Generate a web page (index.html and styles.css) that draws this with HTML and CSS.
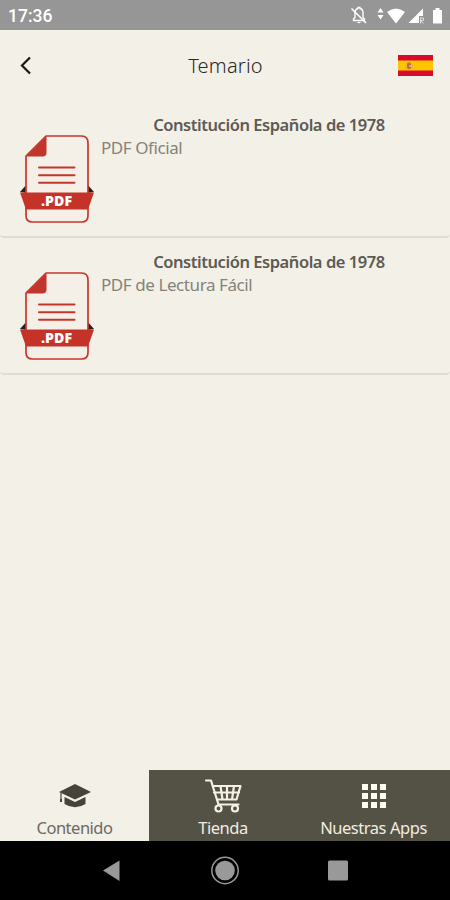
FILE: index.html
```html
<!DOCTYPE html>
<html lang="es">
<head>
<meta charset="utf-8">
<title>Temario</title>
<link rel="stylesheet" href="styles.css">
</head>
<body>
<div class="screen">
  <div class="status">
    <span class="time">17:36</span>
    <svg class="status-icons" width="100" height="30" viewBox="350 0 100 30" fill="#fff">
      <path d="M353.500 20.500V19l1.500-1.500V13q0-4 3-4.500V7.500h2v1q3 .500 3 4.500v4.500l1.500 1.500v1.500z" fill="none" stroke="#fff" stroke-width="1.400"/>
      <path d="M357 22h4q-2 2.500-4 0z"/>
      <path d="M351.500 8.500 366 23" stroke="#fff" stroke-width="1.600"/>
      <path d="M380.500 8l3 4.500h-6zM380.500 19.500l3-4.500h-6z"/>
      <path d="M387 12q9-7 18 0l-9 11.500z"/>
      <path d="M408.500 23 423 8.500V16h-4v7z"/>
      <path d="M420 18h3.500M420.500 18v5.500M423.500 18v2.500h-3l3 3" fill="none" stroke="#ddd"/>
      <path d="M433 10h2.500V8h4v2h2.500v13.500h-9z"/>
    </svg>
  </div>
  <header class="header">
    <svg class="back" width="14" height="20" viewBox="0 0 14 20"><path d="M11 1.500 3 9.500l8 8" fill="none" stroke="#171714" stroke-width="2.200"/></svg>
    <h1>Temario</h1>
    <svg class="flag" width="35" height="21" viewBox="0 0 35 21">
      <path fill="#d90a2c" d="M0 0h35v21H0z"/><path fill="#ffc400" d="M0 5.500h35v10H0z"/>
      <path d="M8 8.500v5M14 9v5" stroke="#e0ac4a"/><path d="M9 8.500h4v4.500q-2 2.500-4 0z" fill="#c4693a"/><path d="M9.500 7.500h3v1.500h-3z" fill="#b0703a"/><path d="M11 10h2v2h-2z" fill="#d8a6a0"/>
    </svg>
  </header>
  <main class="list">
    <article class="item">
      <svg class="pdf" width="76" height="90" viewBox="0 0 76 90">
        <path d="M1 58 8 50v9zM75 58 68 50v9z" fill="#222"/>
        <path d="M7 60V22L27 2H62.500Q69 2 69 9V81.500Q69 88 62.500 88H13.500Q7 88 7 81.500Z" fill="#f4f0e8" stroke="#c8362b" stroke-width="1.700" stroke-linejoin="round"/>
        <path d="M7 22.500 27.500 2V18.500Q27.500 22.500 23.500 22.500Z" fill="#c2352a"/>
        <path d="M20 33.500H55.500M20 41.300H55.500M20 48.700H55.500" stroke="#c2372c" stroke-width="2" stroke-linecap="round"/>
        <path d="M1 58.500H75L69 75.500H7Z" fill="#c53328"/>
        <text x="22" y="72" textLength="31" lengthAdjust="spacingAndGlyphs" class="pdf-label">.PDF</text>
      </svg>
      <div class="copy"><h2>Constitución Española de 1978</h2><p class="official">PDF Oficial</p></div>
    </article>
    <article class="item">
      <svg class="pdf" width="76" height="90" viewBox="0 0 76 90">
        <path d="M1 58 8 50v9zM75 58 68 50v9z" fill="#222"/>
        <path d="M7 60V22L27 2H62.500Q69 2 69 9V81.500Q69 88 62.500 88H13.500Q7 88 7 81.500Z" fill="#f4f0e8" stroke="#c8362b" stroke-width="1.700" stroke-linejoin="round"/>
        <path d="M7 22.500 27.500 2V18.500Q27.500 22.500 23.500 22.500Z" fill="#c2352a"/>
        <path d="M20 33.500H55.500M20 41.300H55.500M20 48.700H55.500" stroke="#c2372c" stroke-width="2" stroke-linecap="round"/>
        <path d="M1 58.500H75L69 75.500H7Z" fill="#c53328"/>
        <text x="22" y="72" textLength="31" lengthAdjust="spacingAndGlyphs" class="pdf-label">.PDF</text>
      </svg>
      <div class="copy"><h2>Constitución Española de 1978</h2><p class="easy">PDF de Lectura Fácil</p></div>
    </article>
  </main>
  <nav class="tabs">
    <div class="tab active">
      <svg width="38" height="36" viewBox="0 0 38 36" fill="#46443a"><path d="M19 6 35 14 19 21.500 3 14z"/><path d="M8.500 19 19 24 29.500 19V26q-10.500 6.500-21 0z"/><path d="M5 15v8" stroke="#46443a" stroke-width="1.200"/><path d="M4 21h2v3H4z"/></svg>
      <span class="contenido">Contenido</span>
    </div>
    <div class="tab">
      <svg width="40" height="36" viewBox="0 0 40 36" fill="none" stroke="#f5f1e3" stroke-width="2.200"><path d="M3 2.500h5L15.500 26.500h20M9.500 8H37.500L33.500 21.500H14M11 14.500h25M17.500 8l2 13.500M24 8v13.500M31 8l-2 13.500" stroke-linejoin="round" stroke-linecap="round"/><circle cx="15.500" cy="30.500" r="3"/><circle cx="32" cy="30.500" r="3"/></svg>
      <span class="tienda">Tienda</span>
    </div>
    <div class="tab">
      <svg width="36" height="36" viewBox="0 0 36 36" fill="#fffdf0"><path d="M6 6h6v6H6zM15 6h6v6h-6zM24 6h6v6h-6zM6 15h6v6H6zM15 15h6v6h-6zM24 15h6v6h-6zM6 24h6v6H6zM15 24h6v6h-6zM24 24h6v6h-6z"/></svg>
      <span class="apps">Nuestras Apps</span>
    </div>
  </nav>
  <footer class="system">
    <svg width="30" height="30" viewBox="0 0 30 30"><path d="M5 15.500 21.500 5.500v20.500z" fill="#999"/></svg>
    <svg width="30" height="30" viewBox="0 0 30 30"><circle cx="15" cy="15.500" r="13.200" fill="none" stroke="#999" stroke-width="1.500"/><circle cx="15" cy="15.500" r="9.800" fill="#999"/></svg>
    <svg width="30" height="30" viewBox="0 0 30 30"><rect x="5" y="5.500" width="20" height="20" rx="1.500" fill="#999"/></svg>
  </footer>
</div>
</body>
</html>
```
FILE: styles.css
```css
* { box-sizing: border-box; }
body { margin: 0; background: #f3f0e8; font-family: "Noto Sans", "Open Sans", sans-serif; }
h1, h2, p { margin: 0; }
svg { display: block; flex: none; }
.screen { width: 450px; height: 900px; display: flex; flex-direction: column; background: #f3f0e8; }
.status { height: 30px; background: #969696; display: flex; justify-content: space-between; align-items: center; padding-left: 8px; }
.time { font: 500 17.5px/30px Roboto, sans-serif; color: #fff; padding-top: 2px; }
.header { height: 71px; display: flex; align-items: center; justify-content: space-between; padding: 0 17px 0 19px; }
h1 { font-size: 20px; line-height: 28px; font-weight: 300; color: #282824; letter-spacing: .2px; padding-left: 20px; }
.item { height: 137px; display: flex; padding: 12px 0 0 19px; border-bottom: 2px solid #dfdcd6; border-radius: 4px; }
.item + .item { height: 136.500px; }
.pdf { margin-top: 21px; }
.pdf-label { font: 800 14px "Open Sans", sans-serif; fill: #fff; }
.copy { flex: 1; padding-left: 6px; white-space: nowrap; }
h2 { font-size: 16.500px; line-height: 23px; font-weight: 600; color: #5d5a53; text-align: center; letter-spacing: -.45px; padding-right: 13px; }
.copy p { font-size: 17px; line-height: 23px; color: #858279; letter-spacing: -.42px; font-weight: 400; }
.tabs { margin-top: auto; height: 71px; display: grid; grid-template-columns: 149px 148px 153px; }
.tab { background: #545145; color: #f1ede1; display: flex; flex-direction: column; align-items: center; padding-top: 8px; white-space: nowrap; }
.tab.active { background: #f3f0e8; color: #6c6960; }
.tab span { font-size: 16.500px; line-height: 24px; margin-top: 2px; letter-spacing: -.5px; }
.tab .apps { letter-spacing: -.45px; }
.system { height: 59px; background: #000; display: flex; justify-content: center; gap: 82.500px; padding-top: 14px; }
```
